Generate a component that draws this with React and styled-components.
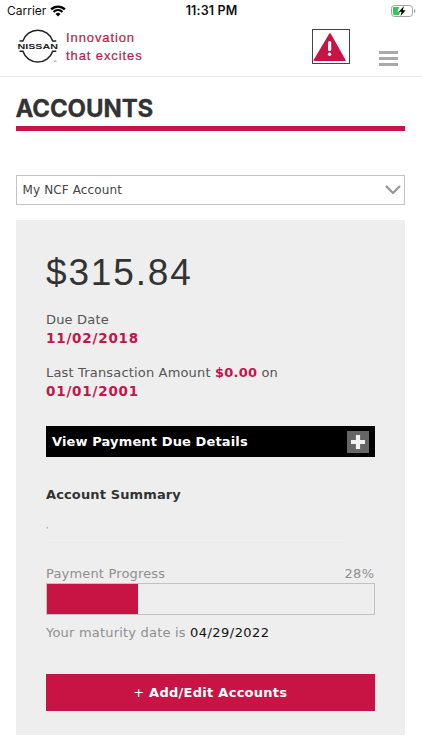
import React from 'react'
import styled, { createGlobalStyle } from 'styled-components';

const account = {
    name: 'My NCF Account',
    amountDue: '$315.84',
    dueDate: '11/02/2018',
    lastAmount: '$0.00',
    lastDate: '01/01/2001',
    progress: 28,
    maturity: '04/29/2022',
};

export default function App() {
    return (
        <>
            <GlobalStyle />
            <Screen>
                <StatusBar />
                <Header />
                <Main>
                    <Title>ACCOUNTS</Title>
                    <AccountSelect>
                        <Text $spacing="0.12px" $size="12px" $color="#444">{account.name}</Text>
                        <svg width="16" height="10" viewBox="0 0 16 10">
                            <path d="M1 1 L8 8 L15 1" fill="none" stroke="#969696" strokeWidth="2.2" />
                        </svg>
                    </AccountSelect>
                    <AccountCard />
                </Main>
            </Screen>
        </>
    );
}

function StatusBar() {
    return (
        <StatusContainer>
            <Carrier>
                Carrier
                <svg width="16" height="12" viewBox="0 0 16 12">
                    <path d="M1.1 4.4 A9.8 9.8 0 0 1 14.9 4.4" fill="none" stroke="#000" strokeWidth="2.3" />
                    <path d="M3.5 6.9 A6.4 6.4 0 0 1 12.5 6.9" fill="none" stroke="#000" strokeWidth="2.1" />
                    <path d="M8 11.6 L5.5 9.1 A3.5 3.5 0 0 1 10.5 9.1 Z" fill="#000" />
                </svg>
            </Carrier>
            <Clock>11:31 PM</Clock>
            <Battery>
                <svg width="25" height="12" viewBox="0 0 25 12">
                    <rect x="0.5" y="0.5" width="21" height="11" rx="3" fill="#fff" stroke="#a3a3a3" />
                    <path d="M3 2 H8.2 L6.4 6.5 H9 L8.3 10 H3 Q2 10 2 9 V3 Q2 2 3 2Z" fill="#34c759" />
                    <path d="M13 1 L7.8 6.8 H10.6 L9.5 11 L14.7 5.3 H11.8 Z" fill="#000" />
                    <path d="M23 4 Q24.5 4.7 24.5 6 Q24.5 7.3 23 8 Z" fill="#a3a3a3" />
                </svg>
            </Battery>
        </StatusContainer>
    );
}

function Header() {
    return (
        <HeaderContainer>
            <svg width="42" height="36" viewBox="0 0 42 36">
                <path d="M2.5 13 H5.9 A15.7 15.7 0 0 1 35.7 13 H39.3" fill="none" stroke="#222" strokeWidth="1.5" />
                <path d="M2.5 23.3 H5.9 A15.7 15.7 0 0 0 35.7 23.3 H39.3" fill="none" stroke="#222" strokeWidth="1.5" />
                <text x="0.5" y="20.9" textLength="40.5" lengthAdjust="spacingAndGlyphs" fontFamily="Liberation Sans, sans-serif" fontSize="7.6" fontWeight="bold" fill="#222">NISSAN</text>
                <path d="M37 33.2 H39.5" stroke="#888" strokeWidth="0.9" />
            </svg>
            <Slogan>Innovation<br />that excites</Slogan>
            <AlertButton>
                <svg width="36" height="33" viewBox="0 0 36 33">
                    <path d="M17 4 L31.9 30.3 H1.3 Z" fill="#c71444" stroke="#c71444" strokeWidth="1.6" strokeLinejoin="round" />
                    <rect x="15" y="11" width="3.2" height="10" rx="1.5" fill="#fff" />
                    <circle cx="16.6" cy="24.2" r="1.7" fill="#fff" />
                </svg>
            </AlertButton>
            <MenuButton>
                <span />
                <span />
                <span />
            </MenuButton>
        </HeaderContainer>
    );
}

function AccountCard() {
    return (
        <Card>
            <Amount>{account.amountDue}</Amount>
            <Details>
                <Text>Due Date</Text>
                <DateText>{account.dueDate}</DateText>
            </Details>
            <Details>
                <Text>Last Transaction Amount <Strong>{account.lastAmount}</Strong> on</Text>
                <DateText>{account.lastDate}</DateText>
            </Details>
            <DetailsButton>
                View Payment Due Details
                <PlusIcon>
                    <svg width="22" height="22" viewBox="0 0 22 22">
                        <path d="M11 4 V18 M4 11 H18" stroke="#f2f2f2" strokeWidth="4.2" />
                    </svg>
                </PlusIcon>
            </DetailsButton>
            <Summary>Account Summary</Summary>
            <Mark>,</Mark>
            <Divider />
            <ProgressLabel>
                <Text $color="#8f8f8f">Payment Progress</Text>
                <Text $color="#8f8f8f" $spacing="0.4px">{account.progress}%</Text>
            </ProgressLabel>
            <ProgressTrack>
                <ProgressFill style={{ width: `${account.progress}%` }} />
            </ProgressTrack>
            <Maturity>Your maturity date is <b>{account.maturity}</b></Maturity>
            <EditButton><i>+</i> Add/Edit Accounts</EditButton>
        </Card>
    );
}

const GlobalStyle = createGlobalStyle`
*{
    box-sizing:border-box;
}
body{
    margin:0;
    background:#fff;
    font-family:"DejaVu Sans", Verdana, sans-serif;
}
svg{
    display:block;
    flex:none;
}
`;
const Screen = styled.div`
width:422px;
height:750px;
overflow:hidden;
background:#fff;
`;
const StatusContainer = styled.div`
display:grid;
grid-template-columns:1fr auto 1fr;
align-items:center;
height:21px;
padding:0 6px 0 7px;
font-family:Inter, sans-serif;
font-size:12.5px;
color:#111;
`;
const Carrier = styled.div`
display:flex;
align-items:center;
gap:4px;
font-size:12px;
`;
const Clock = styled.div`
font-weight:600;
letter-spacing:0.15px;
`;
const Battery = styled.div`
justify-self:end;
`;
const HeaderContainer = styled.header`
display:flex;
align-items:flex-start;
height:56px;
padding:7px 24px 0 17px;
border-bottom:1px solid #e8e8e8;
`;
const Slogan = styled.div`
margin:1px auto 0 7px;
font-family:"Liberation Sans", sans-serif;
font-size:13px;
line-height:18px;
letter-spacing:0.9px;
color:#c3184b;
-webkit-text-stroke:0.2px #c3184b;
`;
const AlertButton = styled.button`
display:flex;
align-items:center;
justify-content:center;
width:38px;
height:35px;
padding:0;
margin-top:1px;
border:1px solid #444;
background:#fff;
`;
const MenuButton = styled.button`
display:flex;
flex-direction:column;
gap:3px;
width:19px;
margin:23px 0 0 29px;
padding:0;
border:0;
background:none;
span{
    height:3px;
    background:#a9a9a9;
}
`;
const Main = styled.main`
padding:17px 17px 0 15.5px;
`;
const Title = styled.h1`
margin:0 0 44px;
height:37px;
border-bottom:5px solid #c71444;
font-family:Inter, sans-serif;
font-size:24px;
font-weight:700;
line-height:30px;
letter-spacing:-0.1px;
color:#333;
-webkit-text-stroke:0.3px #333;
`;
const AccountSelect = styled.div`
display:flex;
align-items:center;
justify-content:space-between;
height:30px;
padding:0 3px 0 6px;
border:1px solid #c4c4c4;
`;
const Text = styled.span`
font-size:${props => props.$size || '13px'};
letter-spacing:${props => props.$spacing || '0.17px'};
color:${props => props.$color || '#555'};
`;
const Strong = styled.strong`
letter-spacing:0.2px;
color:#c3154a;
`;
const DateText = styled.strong`
font-size:13.5px;
letter-spacing:0.8px;
color:#c3154a;
`;
const Card = styled.section`
display:flex;
flex-direction:column;
height:515px;
margin-top:15px;
padding:30px 30.5px 0;
background:#eee;
`;
const Amount = styled.div`
height:61px;
font-family:"Liberation Sans", sans-serif;
font-size:37px;
line-height:46px;
letter-spacing:1.85px;
color:#333;
`;
const Details = styled.div`
display:flex;
flex-direction:column;
height:36px;
margin-bottom:17px;
line-height:18px;
`;
const DetailsButton = styled.button`
display:flex;
align-items:center;
justify-content:space-between;
flex:none;
height:31px;
margin-top:9px;
padding:0 6px;
border:0;
background:#000;
font-family:inherit;
font-size:13px;
font-weight:bold;
letter-spacing:0.13px;
color:#fff;
`;
const PlusIcon = styled.span`
background:#666;
`;
const Summary = styled.h2`
margin:28px 0 0;
font-size:13px;
line-height:20px;
letter-spacing:0.13px;
color:#333;
`;
const Mark = styled.div`
height:37px;
padding-top:13px;
font-size:8px;
line-height:16px;
color:#999;
`;
const Divider = styled.div`
width:298px;
height:1px;
background:#e9e9e9;
`;
const ProgressLabel = styled.div`
display:flex;
justify-content:space-between;
margin-top:22px;
line-height:18px;
`;
const ProgressTrack = styled.div`
flex:none;
height:32px;
border:1px solid #c2c2c2;
`;
const ProgressFill = styled.div`
height:100%;
background:#c71444;
`;
const Maturity = styled.div`
height:59px;
padding-top:9px;
font-size:13px;
line-height:18px;
letter-spacing:0.2px;
color:#8f8f8f;
b{
    font-weight:normal;
    letter-spacing:0.45px;
    color:#111;
}
`;
const EditButton = styled.button`
flex:none;
height:37px;
padding:0;
border:0;
background:#c71444;
font-family:inherit;
font-size:13px;
font-weight:bold;
letter-spacing:0.27px;
color:#fff;
i{
    font-style:normal;
    font-weight:normal;
}
`;
